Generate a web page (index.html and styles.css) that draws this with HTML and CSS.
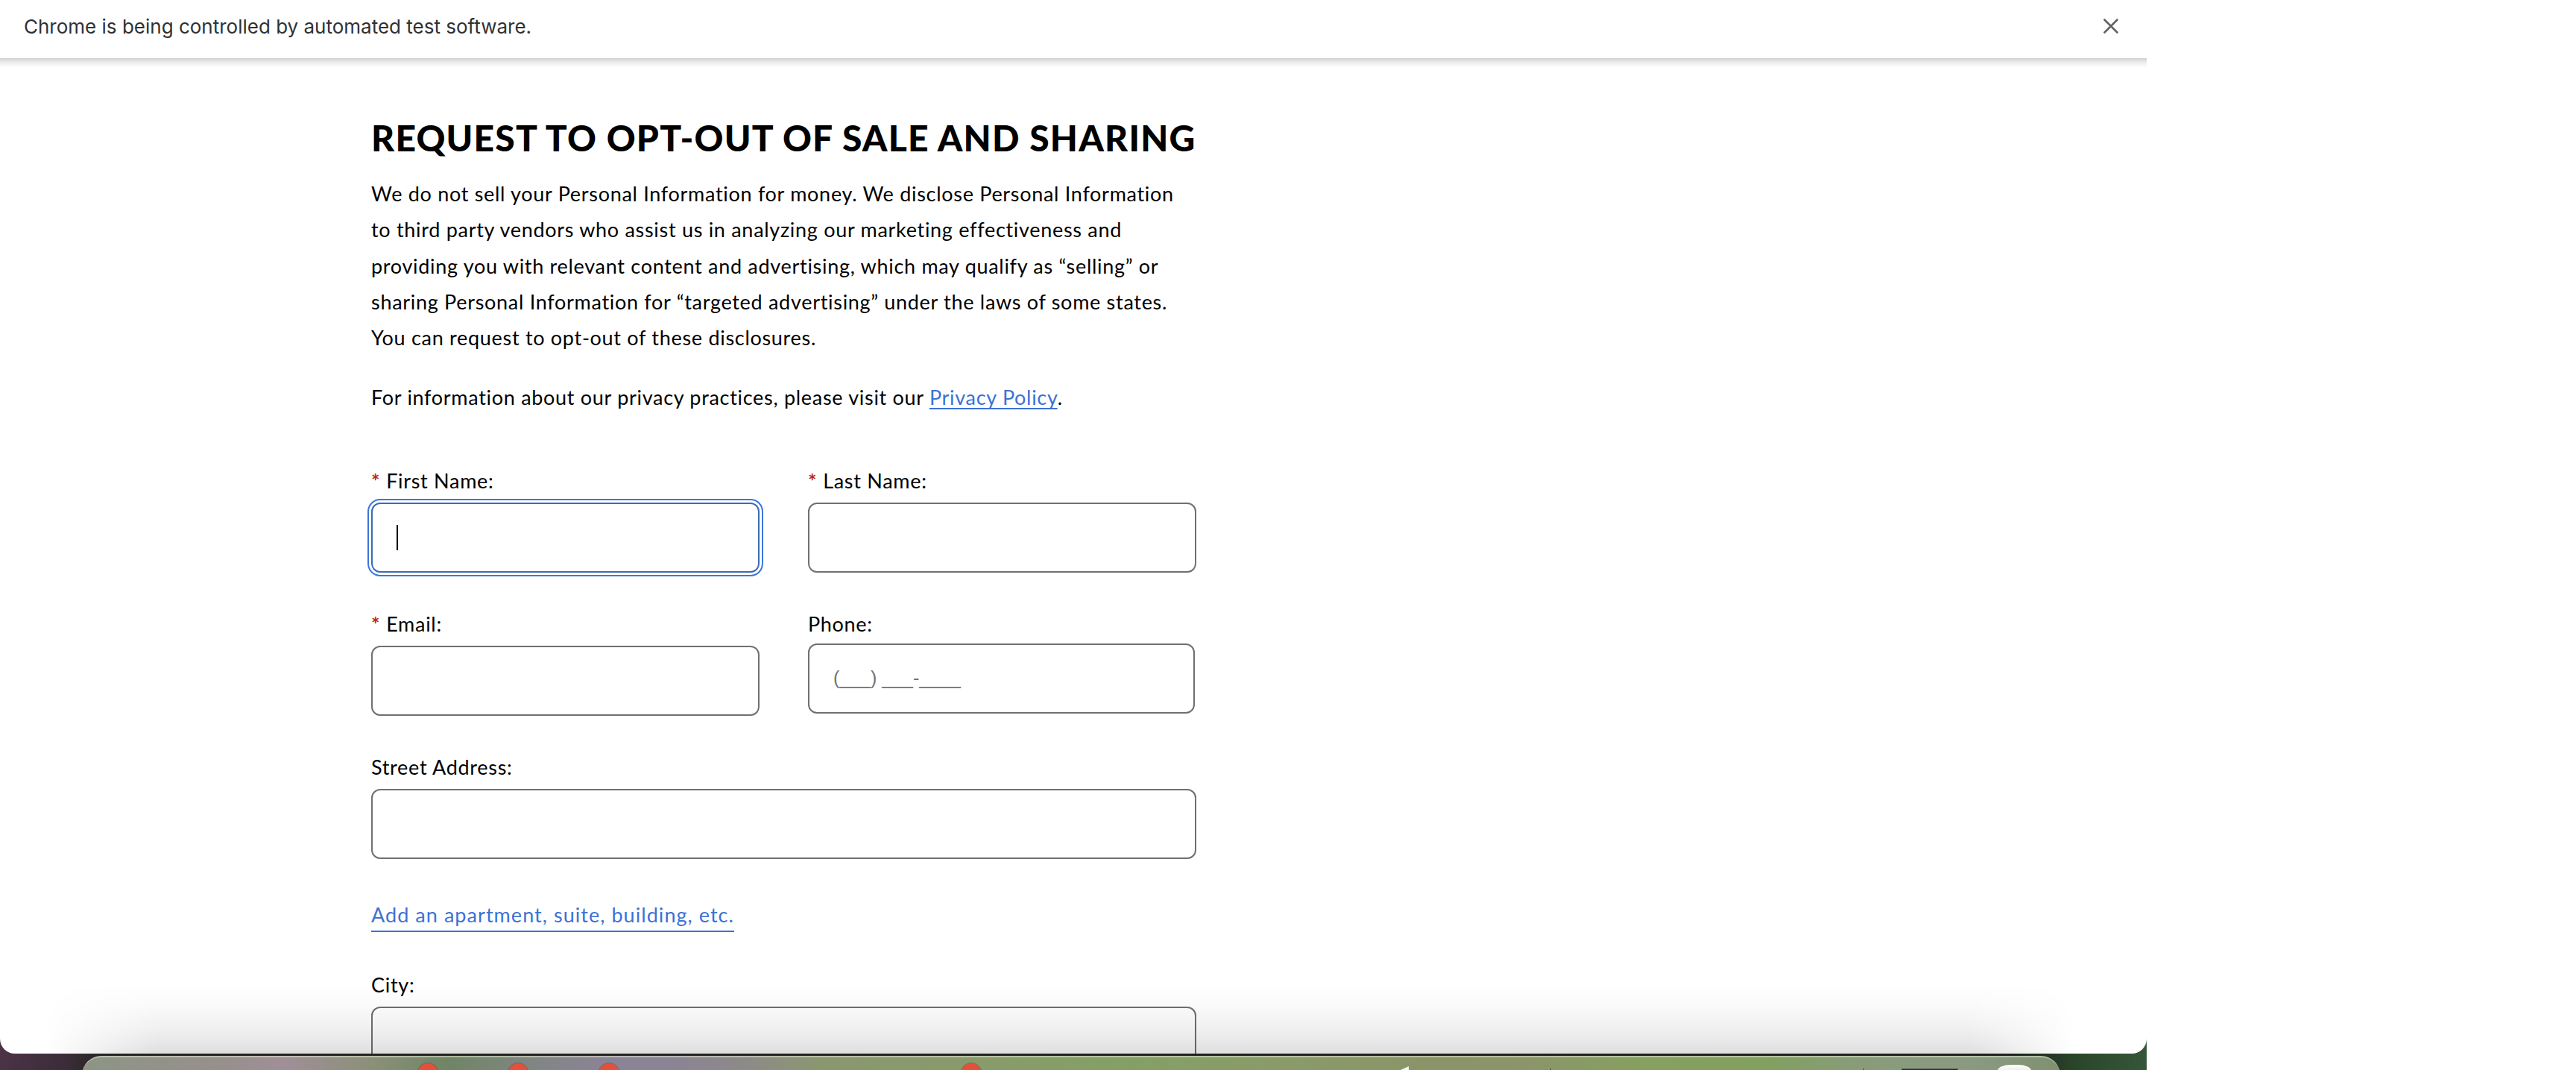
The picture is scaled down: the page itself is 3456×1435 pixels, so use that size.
FILE: index.html
```html
<!DOCTYPE html>
<html lang="en">
<head>
<meta charset="utf-8">
<title>Request to Opt-Out of Sale and Sharing</title>
<link rel="stylesheet" href="styles.css">
</head>
<body>
<div class="screen">
  <div class="window">
    <div class="infobar">
      <span class="infobar-text">Chrome is being controlled by automated test software.</span>
      <svg class="infobar-close" width="20" height="20" viewBox="0 0 20 20" aria-label="Close"><path d="M1.5 1.5 L18.5 18.5 M18.5 1.5 L1.5 18.5" stroke="#5f6368" stroke-width="2.6" stroke-linecap="round" fill="none"/></svg>
    </div>
    <div class="infobar-shadow"></div>
    <main class="page">
      <section class="content">
        <h1 class="title">REQUEST TO OPT-OUT OF SALE AND SHARING</h1>
        <p class="intro">We do not sell your Personal Information for money. We disclose Personal Information<br>to third party vendors who assist us in analyzing our marketing effectiveness and<br>providing you with relevant content and advertising, which may qualify as “selling” or<br>sharing Personal Information for “targeted advertising” under the laws of some states.<br>You can request to opt-out of these disclosures.</p>
        <p class="policy">For information about our privacy practices, please visit our <a class="policy-link" href="#">Privacy Policy</a>.</p>
        <form class="form">
          <div class="row two">
            <div class="field">
              <div class="label"><span class="req">*</span>First Name:</div>
              <div class="input focused"><span class="caret"></span></div>
            </div>
            <div class="field">
              <div class="label"><span class="req">*</span>Last Name:</div>
              <div class="input"></div>
            </div>
          </div>
          <div class="row two">
            <div class="field">
              <div class="label"><span class="req">*</span>Email:</div>
              <div class="input"></div>
            </div>
            <div class="field">
              <div class="label">Phone:</div>
              <div class="input phone"><span class="placeholder">(___) ___-____</span></div>
            </div>
          </div>
          <div class="row">
            <div class="field">
              <div class="label">Street Address:</div>
              <div class="input"></div>
            </div>
          </div>
          <div class="row add-row">
            <a class="add-link" href="#">Add an apartment, suite, building, etc.</a>
          </div>
          <div class="row city-row">
            <div class="field">
              <div class="label">City:</div>
              <div class="input"></div>
            </div>
          </div>
        </form>
      </section>
    </main>
  </div>
  <div class="desktop"></div>
  <div class="dock">
    <span class="badge b1"></span>
    <span class="badge b2"></span>
    <span class="badge b3"></span>
    <span class="badge b4"></span>
    <span class="dock-arrow"></span>
    <span class="dock-tick t1"></span>
    <span class="dock-tick t2"></span>
    <span class="dock-dark"></span>
    <span class="dock-white"></span>
  </div>
</div>
</body>
</html>
```
FILE: styles.css
```css
* { box-sizing: border-box; }
html, body {
  margin: 0;
  padding: 0;
  background: #ffffff;
}
body {
  width: 3456px;
  height: 1435px;
  overflow: hidden;
  font-family: "Lato", "Open Sans", sans-serif;
  color: #000;
}
.screen {
  position: relative;
  width: 2880px;
  height: 1435px;
  display: flex;
  flex-direction: column;
  background: linear-gradient(to right, #4a3346 0, #3a2c38 90px, #24251f 140px, #1e231c 2700px, #2b472b 2790px, #35563a 2880px);
}
.window {
  height: 1413px;
  flex: none;
  background: #fff;
  border-radius: 0 0 20px 20px;
  overflow: hidden;
  display: flex;
  flex-direction: column;
}
.infobar {
  height: 78px;
  flex: none;
  display: flex;
  align-items: center;
  justify-content: space-between;
  padding: 0 38px 8px 32px;
  background: #fff;
}
.infobar-text {
  font-family: "Inter", "Roboto", sans-serif;
  font-size: 26px;
  color: #303134;
}
.infobar-close { display: block; }
.infobar-shadow {
  height: 12px;
  flex: none;
  background: linear-gradient(#d0d0d0, #ebebeb 45%, #ffffff);
}
.page {
  flex: 1;
  overflow: hidden;
}
.content {
  margin-left: 498px;
  width: 1107px;
  padding-top: 66px;
}
.title {
  margin: 0;
  font-family: "Lato", sans-serif;
  font-weight: 900;
  font-size: 48px;
  line-height: 58px;
  letter-spacing: 1.2px;
  white-space: nowrap;
}
.intro,
.policy,
.label,
.add-link {
  font-size: 27px;
  letter-spacing: 0.7px;
}
.intro {
  margin: 22px 0 0;
  line-height: 48.25px;
  white-space: nowrap;
}
.policy {
  margin: 32px 0 0;
  line-height: 48.25px;
  white-space: nowrap;
}
.policy-link {
  color: #3b72d6;
  text-decoration: underline;
  text-decoration-thickness: 1.5px;
  text-underline-offset: 4px;
}
.form {
  margin-top: 71px;
}
.row + .row { margin-top: 53px; }
.row.two {
  display: grid;
  grid-template-columns: 1fr 1fr;
  column-gap: 65px;
}
.label {
  line-height: 32px;
  white-space: nowrap;
}
.req {
  color: #c0281e;
  font-weight: 700;
  margin-right: 8px;
}
.input {
  margin-top: 13px;
  height: 94px;
  border: 2px solid #707070;
  border-radius: 12px;
  background: #fff;
  display: flex;
  align-items: center;
  padding-left: 32px;
}
.input.focused {
  border-color: #3d6bb5;
  outline: 2px solid #3a78db;
  outline-offset: 3px;
}
.caret {
  width: 2px;
  height: 34px;
  background: #000;
}
.input.phone {
  margin-top: 10px;
  margin-right: 2px;
}
.placeholder {
  font-family: "Liberation Sans", Arial, sans-serif;
  font-size: 25px;
  color: #6e7378;
}
.row.add-row { margin-top: 59px; }
.add-link {
  display: inline-block;
  line-height: 32px;
  letter-spacing: 1.05px;
  color: #3b72d6;
  text-decoration: none;
  padding-bottom: 5px;
  border-bottom: 2px solid #3b72d6;
}
.row.city-row { margin-top: 55px; }
.desktop {
  flex: 1;
}
.dock {
  position: absolute;
  left: 110px;
  top: 1416px;
  width: 2654px;
  height: 60px;
  border-radius: 26px 26px 0 0;
  border-top: 2px solid rgba(220, 225, 205, 0.55);
  background: linear-gradient(to right,
    #8d9585 0, #978f8c 190px, #a08f98 270px, #8b9078 390px, #6f8566 490px,
    #7f8680 590px, #8b8396 700px, #8b8494 800px, #8d8a88 890px, #8a9770 990px,
    #8a9a6c 1190px, #84a066 1390px, #8b9a6a 1640px, #8a9468 1790px, #8c946a 1930px,
    #86a060 2090px, #82a060 2260px, #889c78 2370px, #8a9a82 2540px, #7f9170 2654px);
}
.dock::before {
  content: "";
  position: absolute;
  left: -50px;
  right: -20px;
  bottom: calc(100% + 5px);
  height: 93px;
  background: linear-gradient(rgba(0,0,0,0) 0%, rgba(0,0,0,0.02) 30%, rgba(0,0,0,0.06) 65%, rgba(0,0,0,0.125) 100%);
  -webkit-mask-image: linear-gradient(to right, transparent 0, #000 150px, #000 calc(100% - 140px), transparent 100%);
  mask-image: linear-gradient(to right, transparent 0, #000 150px, #000 calc(100% - 140px), transparent 100%);
  pointer-events: none;
}
.badge {
  position: absolute;
  top: 8px;
  width: 28px;
  height: 30px;
  border-radius: 50%;
  background: #e2513b;
  box-shadow: 0 0 0 1px rgba(120, 40, 30, 0.35);
}
.b1 { left: 450px; }
.b2 { left: 571px; }
.b3 { left: 693px; }
.b4 { left: 1179px; }
.dock-arrow {
  position: absolute;
  left: 1758px;
  top: 12px;
  width: 0;
  height: 0;
  border-left: 22px solid transparent;
  border-bottom: 10px solid #f4f4f4;
}
.dock-tick {
  position: absolute;
  top: 15px;
  width: 1px;
  height: 8px;
  background: #3a3f33;
}
.t1 { left: 1970px; }
.t2 { left: 2390px; }
.dock-dark {
  position: absolute;
  left: 2441px;
  top: 15px;
  width: 76px;
  height: 10px;
  background: #2b2b2b;
  border: 1px solid #555;
}
.dock-white {
  position: absolute;
  left: 2570px;
  top: 10px;
  width: 45px;
  height: 20px;
  border-radius: 40% 40% 0 0;
  background: linear-gradient(#ffffff, #cfcfcf);
}
```
